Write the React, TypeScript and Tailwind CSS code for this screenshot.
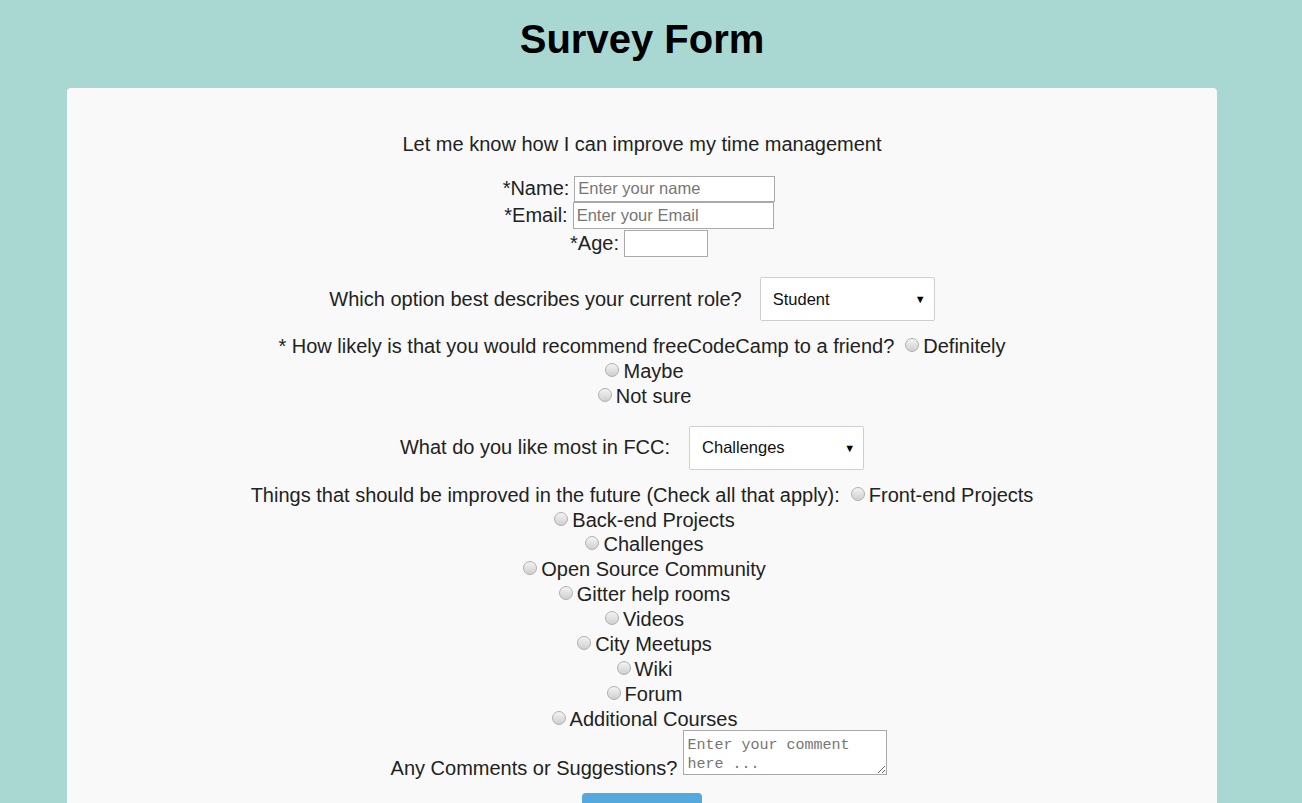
import { ReactNode } from 'react'

const IMPROVE = [
  'Back-end Projects',
  'Challenges',
  'Open Source Community',
  'Gitter help rooms',
  'Videos',
  'City Meetups',
  'Wiki',
  'Forum',
  'Additional Courses',
]

function Radio() {
  return (
    <span className="inline-block w-[14px] h-[14px] rounded-full border border-[#b0b0b0] bg-gradient-to-b from-[#f4f4f4] to-[#cfcfcf] ml-[5px] mr-[4px] mb-[3px] shrink-0" />
  )
}

function Line({ children }: { children: ReactNode }) {
  return <div className="h-[24.9px] flex items-center justify-center whitespace-nowrap">{children}</div>
}

function Select({ value }: { value: string }) {
  return (
    <div className="relative w-[175px] h-[44px]">
      <div className="w-full h-full bg-white border border-[#cfcfcf] rounded-[2px] pl-[12px] flex items-center text-[16.5px] text-[#111]">
        {value}
      </div>
      <span className="absolute right-[9px] top-1/2 -translate-y-1/2 text-[11px] leading-none text-black">▼</span>
    </div>
  )
}

export default function App() {
  return (
    <div className="min-h-screen bg-[#a9d8d3] pr-[18px] font-['Liberation_Sans',Arial,sans-serif] text-[#222]">
      <h1 className="pt-[16px] text-center text-[40px] leading-[46px] font-bold text-black">Survey Form</h1>

      <div className="mx-auto mt-[26px] w-[1150px] bg-[#f9f9f9] rounded-[4px] pt-[45px] pb-10 text-[20px] leading-[23px]">
        <p className="text-center">Let me know how I can improve my time management</p>

        {/* Personal info */}
        <div className="mt-[19px] pr-[6px]">
          <div className="h-[27px] flex items-center justify-center gap-[5px]">
            <span>*Name:</span>
            <input
              placeholder="Enter your name"
              className="w-[201px] h-[26px] bg-white border border-[#a9a9a9] px-[3px] text-[16.5px] placeholder:text-[#767676] outline-none"
            />
          </div>
          <div className="h-[27px] flex items-center justify-center gap-[5px]">
            <span>*Email:</span>
            <input
              placeholder="Enter your Email"
              className="w-[201px] h-[27px] bg-white border border-[#a9a9a9] px-[3px] text-[16.5px] placeholder:text-[#767676] outline-none"
            />
          </div>
          <div className="h-[28px] flex items-center justify-center gap-[5px]">
            <span>*Age:</span>
            <input className="w-[84px] h-[27px] bg-white border border-[#a9a9a9] outline-none" />
          </div>
        </div>

        {/* Role */}
        <div className="mt-[20px] pr-[20px] flex items-center justify-center gap-[18px]">
          <span>Which option best describes your current role?</span>
          <Select value="Student" />
        </div>

        {/* Recommend */}
        <div className="mt-[13px]">
          <Line>
            <span className="mr-[6px]">* How likely is that you would recommend freeCodeCamp to a friend?</span>
            <Radio />
            <span>Definitely</span>
          </Line>
          <Line>
            <Radio />
            <span>Maybe</span>
          </Line>
          <Line>
            <Radio />
            <span>Not sure</span>
          </Line>
        </div>

        {/* Favourite */}
        <div className="mt-[17px] pr-[20px] flex items-center justify-center gap-[19px]">
          <span>What do you like most in FCC:</span>
          <Select value="Challenges" />
        </div>

        {/* Improvements */}
        <div className="mt-[13px]">
          <Line>
            <span className="mr-[6px]">Things that should be improved in the future (Check all that apply):</span>
            <Radio />
            <span>Front-end Projects</span>
          </Line>
          {IMPROVE.map(item => (
            <Line key={item}>
              <Radio />
              <span>{item}</span>
            </Line>
          ))}
        </div>

        {/* Comments */}
        <div className="mt-[-2px] pr-[6px] flex items-end justify-center gap-[6px]">
          <span className="mb-[-5px]">Any Comments or Suggestions?</span>
          <textarea
            placeholder="Enter your comment here ..."
            className="w-[204px] h-[45px] bg-white border border-[#a9a9a9] px-[3px] pt-[5px] pb-0 font-['Liberation_Mono',monospace] text-[15px] leading-[19px] placeholder:text-[#767676] outline-none"
          />
        </div>

        <div className="mt-[18px] flex justify-center">
          <button className="w-[120px] h-[40px] bg-[#55a8dc] rounded-[4px] text-white text-[16px]">Submit</button>
        </div>
      </div>
    </div>
  )
}
